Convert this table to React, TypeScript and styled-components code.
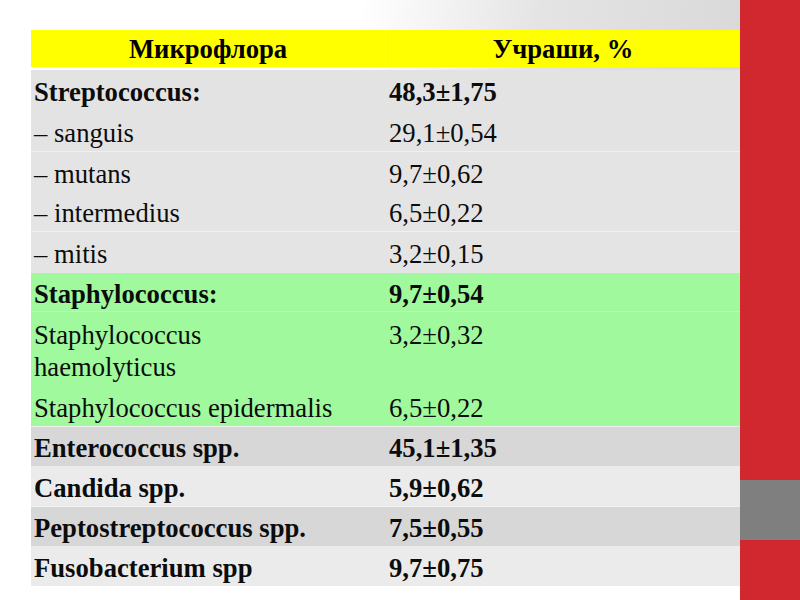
import React from "react";
import styled, { createGlobalStyle } from "styled-components";

const Global = createGlobalStyle`
  html, body { margin: 0; padding: 0; }
  body {
    width: 800px;
    height: 600px;
    overflow: hidden;
    font-family: "Liberation Serif", "Times New Roman", serif;
  }
`;

const Slide = styled.div`
  width: 800px;
  height: 600px;
  display: flex;
  background:
    linear-gradient(to bottom, rgba(255,255,255,0) 55%, #ffffff 97%),
    linear-gradient(100deg, #ffffff 40%, #e4e4e4 60%, #d8d8d8 85%);
`;

const Content = styled.div`
  flex: 0 0 740px;
  padding: 30px 0 0 31px;
  box-sizing: border-box;
`;

const SideBar = styled.div`
  flex: 1;
  display: flex;
  flex-direction: column;
  background: #d1272e;
`;

const RedPart = styled.div<{ $h: number }>`
  height: ${(p) => p.$h}px;
  background: #d1272e;
`;

const GrayPart = styled.div`
  height: 60px;
  background: #7f7f7f;
`;

const Table = styled.div`
  width: 709px;
  display: flex;
  flex-direction: column;
`;

const HeaderRow = styled.div`
  display: grid;
  grid-template-columns: 354px 355px;
  height: 37px;
  background: #ffff00;
  margin-bottom: 3px;
`;

const HeaderCell = styled.div<{ $divider?: boolean }>`
  display: flex;
  align-items: center;
  justify-content: center;
  font-weight: bold;
  font-size: 26.67px;
  color: #000;
  padding-top: 1px;
  box-sizing: border-box;
  border-left: ${(p) => (p.$divider ? "1px solid #f4f48a" : "none")};
`;

const Row = styled.div<{ $h: number; $bg: string; $sep?: string; $top?: boolean }>`
  display: grid;
  grid-template-columns: 354px 355px;
  height: ${(p) => p.$h}px;
  background: ${(p) => p.$bg};
  border-top: ${(p) => (p.$sep ? `1px solid ${p.$sep}` : "none")};
  align-items: ${(p) => (p.$top ? "start" : "center")};
  box-sizing: content-box;
`;

const Cell = styled.div<{ $bold?: boolean; $top?: boolean }>`
  font-size: 26.67px;
  line-height: 32px;
  font-weight: ${(p) => (p.$bold ? "bold" : "normal")};
  color: #0c0c0c;
  padding-left: 3px;
  padding-right: 44px;
  padding-top: ${(p) => (p.$top ? "7px" : "3px")};
`;

const ValueCell = styled(Cell)`
  padding-left: 4px;
  padding-right: 6px;
`;

type RowData = {
  name: string;
  value: string;
  h: number;
  bg: string;
  bold?: boolean;
  sep?: string;
  top?: boolean;
};

const GREEN = "#a0f99c";
const rows: RowData[] = [
  { name: "Streptococcus:", value: "48,3±1,75", h: 41, bg: "#e3e3e3", bold: true },
  { name: "– sanguis", value: "29,1±0,54", h: 40, bg: "#e3e3e3" },
  { name: "– mutans", value: "9,7±0,62", h: 40, bg: "#e4e4e4", sep: "#f0f0f0" },
  { name: "– intermedius", value: "6,5±0,22", h: 39, bg: "#e4e4e4" },
  { name: "– mitis", value: "3,2±0,15", h: 41, bg: "#e4e4e4", sep: "#f0f0f0" },
  { name: "Staphylococcus:", value: "9,7±0,54", h: 38, bg: GREEN, bold: true },
  { name: "Staphylococcus haemolyticus", value: "3,2±0,32", h: 74, bg: GREEN, sep: "#b8f7b4", top: true },
  { name: "Staphylococcus epidermalis", value: "6,5±0,22", h: 40, bg: GREEN },
  { name: "Enterococcus spp.", value: "45,1±1,35", h: 39, bg: "#d7d7d7", bold: true, sep: "#eeeeee" },
  { name: "Candida spp.", value: "5,9±0,62", h: 40, bg: "#ebebeb", bold: true },
  { name: "Peptostreptococcus spp.", value: "7,5±0,55", h: 39, bg: "#d7d7d7", bold: true, sep: "#f2f2f2" },
  { name: "Fusobacterium spp", value: "9,7±0,75", h: 40, bg: "#ebebeb", bold: true },
];

export default function App() {
  return (
    <>
      <Global />
      <Slide>
        <Content>
          <Table>
            <HeaderRow>
              <HeaderCell>Микрофлора</HeaderCell>
              <HeaderCell $divider>Учраши, %</HeaderCell>
            </HeaderRow>
            {rows.map((r) => (
              <Row key={r.name} $h={r.h} $bg={r.bg} $sep={r.sep} $top={r.top}>
                <Cell $bold={r.bold} $top={r.top}>{r.name}</Cell>
                <ValueCell $bold={r.bold} $top={r.top}>{r.value}</ValueCell>
              </Row>
            ))}
          </Table>
        </Content>
        <SideBar>
          <RedPart $h={480} />
          <GrayPart />
          <RedPart $h={60} />
        </SideBar>
      </Slide>
    </>
  );
}
